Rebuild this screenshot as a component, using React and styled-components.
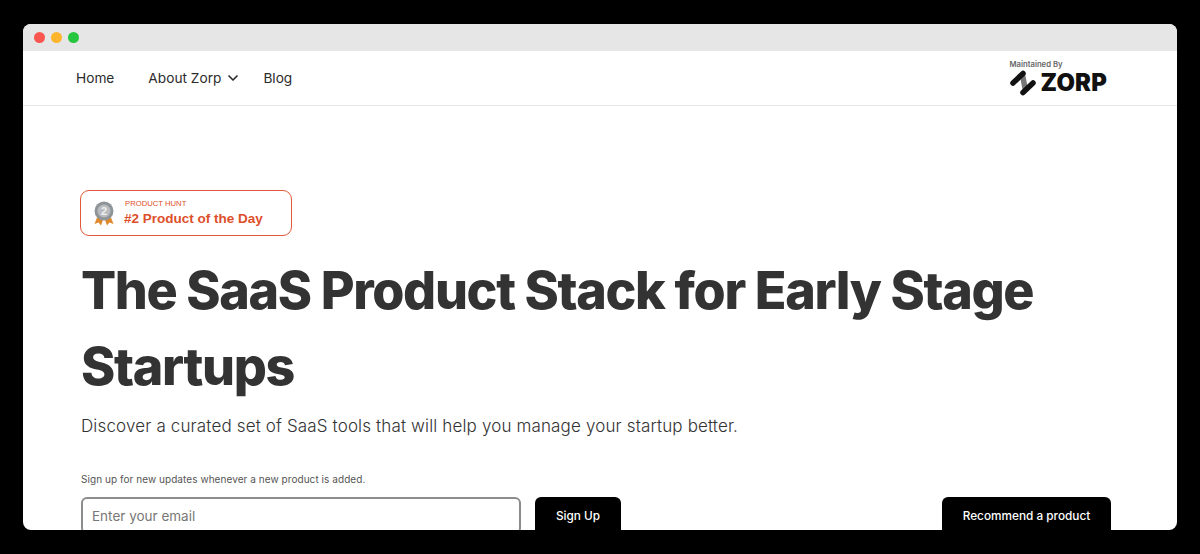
import React from "react"
import styled, { createGlobalStyle } from "styled-components"
import { ChevronDown } from "lucide-react"

const GlobalStyle = createGlobalStyle`
  html, body {
    margin: 0;
    background: #000;
    font-family: "Inter", "Liberation Sans", sans-serif;
  }
  * {
    box-sizing: border-box;
  }
`

const Page = styled.div`
  width: 1200px;
  height: 554px;
  padding: 24px 23px;
  overflow: hidden;
`

const Window = styled.div`
  height: 506px;
  background: #fff;
  border-radius: 8px;
  overflow: hidden;
`

const TitleBar = styled.div`
  display: flex;
  align-items: center;
  gap: 6px;
  height: 27px;
  padding-left: 11px;
  background: #e6e6e6;
`

const Dot = styled.span`
  width: 11px;
  height: 11px;
  border-radius: 50%;
  background: ${(p) => p.color};
`

const Nav = styled.nav`
  display: flex;
  align-items: center;
  justify-content: space-between;
  height: 55px;
  padding: 0 70px 1px 53px;
  border-bottom: 1px solid #e8e8e8;
`

const NavLinks = styled.div`
  display: flex;
  align-items: center;
`

const NavLink = styled.a`
  display: flex;
  align-items: center;
  gap: 4px;
  margin-right: ${(p) => p.$gap}px;
  font-size: 13.7px;
  font-weight: 400;
  color: #2b2b2b;
`

const Brand = styled.div`
  display: flex;
  flex-direction: column;
  gap: 1px;
`

const BrandCaption = styled.span`
  font-size: 7.7px;
  line-height: 9px;
  font-weight: 600;
  color: #666;
`

const BrandRow = styled.div`
  display: flex;
  align-items: center;
  gap: 5px;
`

const BrandName = styled.span`
  font-size: 23.8px;
  line-height: 26px;
  font-weight: 900;
  color: #111;
  letter-spacing: 0.2px;
`

const Main = styled.main`
  padding: 84px 66px 0 58px;
`

const Badge = styled.div`
  display: flex;
  align-items: center;
  gap: 10px;
  width: 212px;
  height: 46px;
  margin-left: -1px;
  padding-left: 13px;
  border: 1px solid #e0593a;
  border-radius: 9px;
`

const BadgeText = styled.div`
  display: flex;
  flex-direction: column;
  font-family: "Liberation Sans", Arial, sans-serif;
  color: #dd4f2b;
`

const BadgeLabel = styled.span`
  padding-left: 1px;
  font-size: 7.7px;
  line-height: 11px;
  margin-top: -2px;
  margin-bottom: 1px;
`

const BadgeTitle = styled.span`
  font-size: 13.5px;
  line-height: 17px;
  font-weight: 700;
`

const Heading = styled.h1`
  margin: 17px 0 0;
  font-size: 52px;
  line-height: 76px;
  font-weight: 800;
  letter-spacing: -1.37px;
  color: #333;
`

const Subtitle = styled.p`
  margin: 9px 0 0;
  font-size: 17px;
  line-height: 24px;
  font-weight: 300;
  letter-spacing: 0.145px;
  color: #333;
`

const Hint = styled.p`
  margin: 34px 0 0;
  font-size: 10px;
  line-height: 14px;
  letter-spacing: 0.06px;
  color: #555;
`

const FormRow = styled.div`
  display: flex;
  align-items: flex-start;
  gap: 14px;
  margin-top: 11px;
`

const EmailInput = styled.input`
  width: 440px;
  height: 37px;
  padding: 0 9px;
  border: 2px solid #8c8c8c;
  border-radius: 6px;
  background: #fff;
  font-family: inherit;
  font-size: 13.5px;
  outline: none;
  &::placeholder {
    color: #777;
    opacity: 1;
  }
`

const Button = styled.button`
  width: ${(p) => p.$width}px;
  height: 38px;
  margin-left: ${(p) => (p.$pushed ? "auto" : 0)};
  border: 0;
  border-radius: 6px;
  background: #000;
  color: #fff;
  font-family: inherit;
  font-size: 11.8px;
  font-weight: 500;
  white-space: nowrap;
`

const ZorpMark = () => (
  <svg width="26" height="26" viewBox="0 0 26 26" aria-hidden="true">
    <g fill="none" strokeLinecap="round" strokeWidth="5.5">
      <path d="M12.5 5 L15 18" stroke="#777" />
      <path d="M3 13 L13 3.5" stroke="#111" />
      <path d="M13 22.5 L23 13" stroke="#111" />
    </g>
  </svg>
)

const Medal = () => (
  <svg width="20" height="25" viewBox="0 0 20 25" aria-hidden="true">
    <path d="M4 14 L0.5 23 L4.5 21.5 L7 24.5 L10 16 Z" fill="#e08a2c" />
    <path d="M16 14 L19.5 23 L15.5 21.5 L13 24.5 L10 16 Z" fill="#e08a2c" />
    <circle cx="10" cy="10" r="9.5" fill="#8f9498" />
    <circle cx="10" cy="10" r="6.5" fill="#b9bcbf" />
    <text x="10" y="14" textAnchor="middle" fontSize="11" fontWeight="700" fontFamily="Liberation Sans" fill="#f1f1f1">
      2
    </text>
  </svg>
)

const App = () => (
  <>
    <GlobalStyle />
    <Page>
      <Window>
        <TitleBar>
          <Dot color="#fb5550" />
          <Dot color="#fdb52d" />
          <Dot color="#27c63f" />
        </TitleBar>
        <Nav>
          <NavLinks>
            <NavLink $gap={34}>Home</NavLink>
            <NavLink $gap={22}>
              About Zorp <ChevronDown size={16} strokeWidth={2.5} />
            </NavLink>
            <NavLink>Blog</NavLink>
          </NavLinks>
          <Brand>
            <BrandCaption>Maintained By</BrandCaption>
            <BrandRow>
              <ZorpMark />
              <BrandName>ZORP</BrandName>
            </BrandRow>
          </Brand>
        </Nav>
        <Main>
          <Badge>
            <Medal />
            <BadgeText>
              <BadgeLabel>PRODUCT HUNT</BadgeLabel>
              <BadgeTitle>#2 Product of the Day</BadgeTitle>
            </BadgeText>
          </Badge>
          <Heading>The SaaS Product Stack for Early Stage Startups</Heading>
          <Subtitle>Discover a curated set of SaaS tools that will help you manage your startup better.</Subtitle>
          <Hint>Sign up for new updates whenever a new product is added.</Hint>
          <FormRow>
            <EmailInput placeholder="Enter your email" />
            <Button $width={86}>Sign Up</Button>
            <Button $width={169} $pushed>
              Recommend a product
            </Button>
          </FormRow>
        </Main>
      </Window>
    </Page>
  </>
)

export default App
